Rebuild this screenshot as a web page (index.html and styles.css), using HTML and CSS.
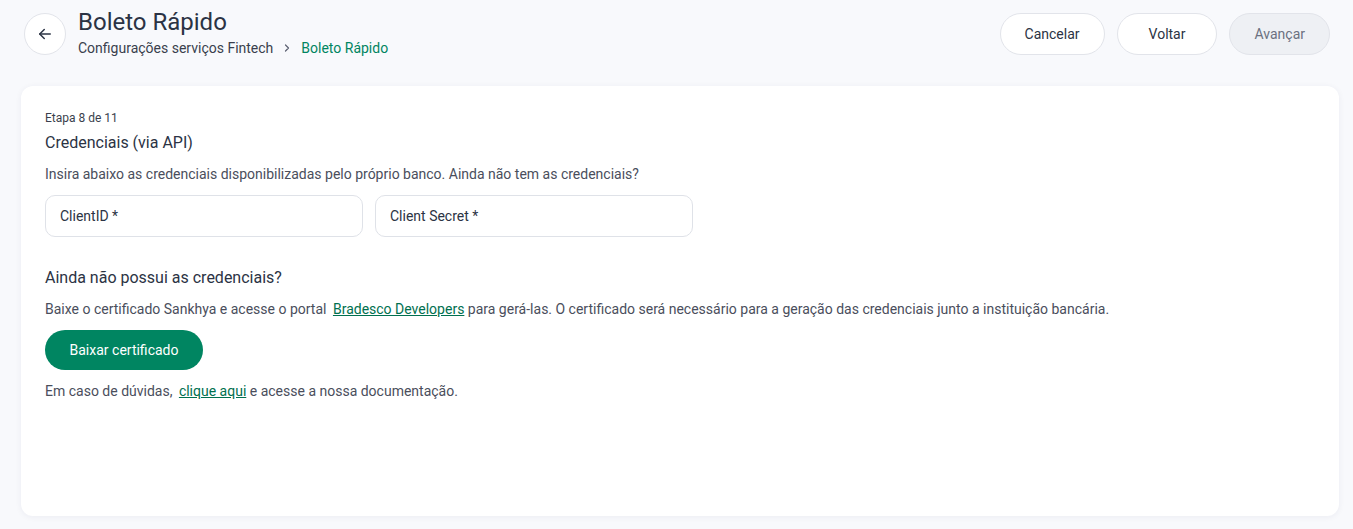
FILE: index.html
```html
<!DOCTYPE html>
<html lang="pt-BR">
<head>
    <meta charset="UTF-8">
    <meta name="viewport" content="width=device-width, initial-scale=1.0">
    <title>Boleto Rápido</title>
    <link rel="stylesheet" href="styles.css">
</head>
<body>
    <header class="header">
        <div class="header-left">
            <button class="back-button" aria-label="Voltar">
                <svg width="18" height="18" viewBox="0 0 24 24" fill="none" stroke="#2b3344" stroke-width="2" stroke-linecap="round" stroke-linejoin="round">
                    <path d="M19 12H5"/>
                    <path d="M11 6l-6 6 6 6"/>
                </svg>
            </button>
            <div class="title-block">
                <h1 class="title">Boleto Rápido</h1>
                <nav class="breadcrumb">
                    <span>Configurações serviços Fintech</span>
                    <svg class="crumb-sep" width="12" height="12" viewBox="0 0 24 24" fill="none" stroke="#5b6070" stroke-width="2.4" stroke-linecap="round" stroke-linejoin="round">
                        <path d="M9 6l6 6-6 6"/>
                    </svg>
                    <span class="crumb-current">Boleto Rápido</span>
                </nav>
            </div>
        </div>
        <div class="header-actions">
            <button class="pill-button">Cancelar</button>
            <button class="pill-button">Voltar</button>
            <button class="pill-button disabled">Avançar</button>
        </div>
    </header>

    <main class="card">
        <div class="step">Etapa 8 de 11</div>
        <h2 class="section-title">Credenciais (via API)</h2>
        <p class="text">Insira abaixo as credenciais disponibilizadas pelo próprio banco. Ainda não tem as credenciais?</p>

        <div class="fields">
            <input type="text" class="field" placeholder="ClientID *">
            <input type="text" class="field" placeholder="Client Secret *">
        </div>

        <h2 class="section-title second">Ainda não possui as credenciais?</h2>
        <p class="text">Baixe o certificado Sankhya e acesse o portal <a href="#" class="link">Bradesco Developers</a> para gerá-las. O certificado será necessário para a geração das credenciais junto a instituição bancária.</p>

        <button class="primary-button">Baixar certificado</button>

        <p class="text">Em caso de dúvidas, <a href="#" class="link">clique aqui</a> e acesse a nossa documentação.</p>
    </main>
</body>
</html>
```

FILE: styles.css
```css
* {
    margin: 0;
    padding: 0;
    box-sizing: border-box;
    font-family: Roboto, "Liberation Sans", sans-serif;
}

body {
    background-color: #f8f9fc;
    min-height: 100vh;
    padding: 0 14px 13px 21px;
    color: #4a4e5c;
}

/* cabeçalho */
.header {
    display: flex;
    justify-content: space-between;
    align-items: flex-start;
    padding: 7px 9px 29px 3px;
}

.header-left {
    display: flex;
    align-items: flex-start;
    gap: 12px;
}

.back-button {
    width: 42px;
    height: 42px;
    border-radius: 50%;
    border: 1px solid #e2e4ea;
    background: #fff;
    display: flex;
    align-items: center;
    justify-content: center;
    cursor: pointer;
    margin-top: 6px;
}

.title {
    font-size: 24px;
    font-weight: 400;
    color: #2b3344;
    line-height: 30px;
}

.breadcrumb {
    display: flex;
    align-items: center;
    gap: 8px;
    font-size: 14px;
    color: #3a3f4d;
    margin-top: 2px;
    line-height: 18px;
}

.crumb-current {
    color: #008561;
}

.header-actions {
    display: flex;
    gap: 12px;
    margin-top: 6px;
}

.pill-button {
    height: 42px;
    padding: 0 24px;
    border-radius: 21px;
    border: 1px solid #e2e4ea;
    background: #fff;
    font-size: 14px;
    color: #2b3344;
    cursor: pointer;
}

.pill-button:nth-child(2) {
    padding: 0 31px;
}

.pill-button.disabled {
    background: #eef0f4;
    color: #6b7080;
    cursor: default;
}

/* cartão principal */
.card {
    background: #fff;
    border-radius: 12px;
    box-shadow: 0 1px 6px rgba(30, 40, 80, 0.06);
    padding: 24px 24px 0;
    height: 430px;
}

.step {
    font-size: 12px;
    color: #3a3f4d;
    line-height: 16px;
}

.section-title {
    font-size: 16px;
    font-weight: 400;
    color: #2b3344;
    line-height: 20px;
    margin-top: 7px;
}

.section-title.second {
    margin-top: 31px;
}

.text {
    font-size: 14px;
    line-height: 18px;
    margin-top: 12px;
    color: #4a4e5c;
}

.link {
    color: #00704f;
    text-decoration: underline;
    margin-left: 3px;
}

.fields {
    display: flex;
    gap: 12px;
    margin-top: 12px;
}

.field {
    width: 318px;
    height: 42px;
    border: 1px solid #dfe2e8;
    border-radius: 10px;
    padding: 0 14px;
    font-size: 14px;
    outline: none;
    background: #fff;
}

.field::placeholder {
    color: #2b3344;
}

.primary-button {
    display: block;
    margin-top: 12px;
    width: 158px;
    height: 40px;
    border-radius: 20px;
    border: none;
    background: #008561;
    color: #fff;
    font-size: 14px;
    cursor: pointer;
}
```
